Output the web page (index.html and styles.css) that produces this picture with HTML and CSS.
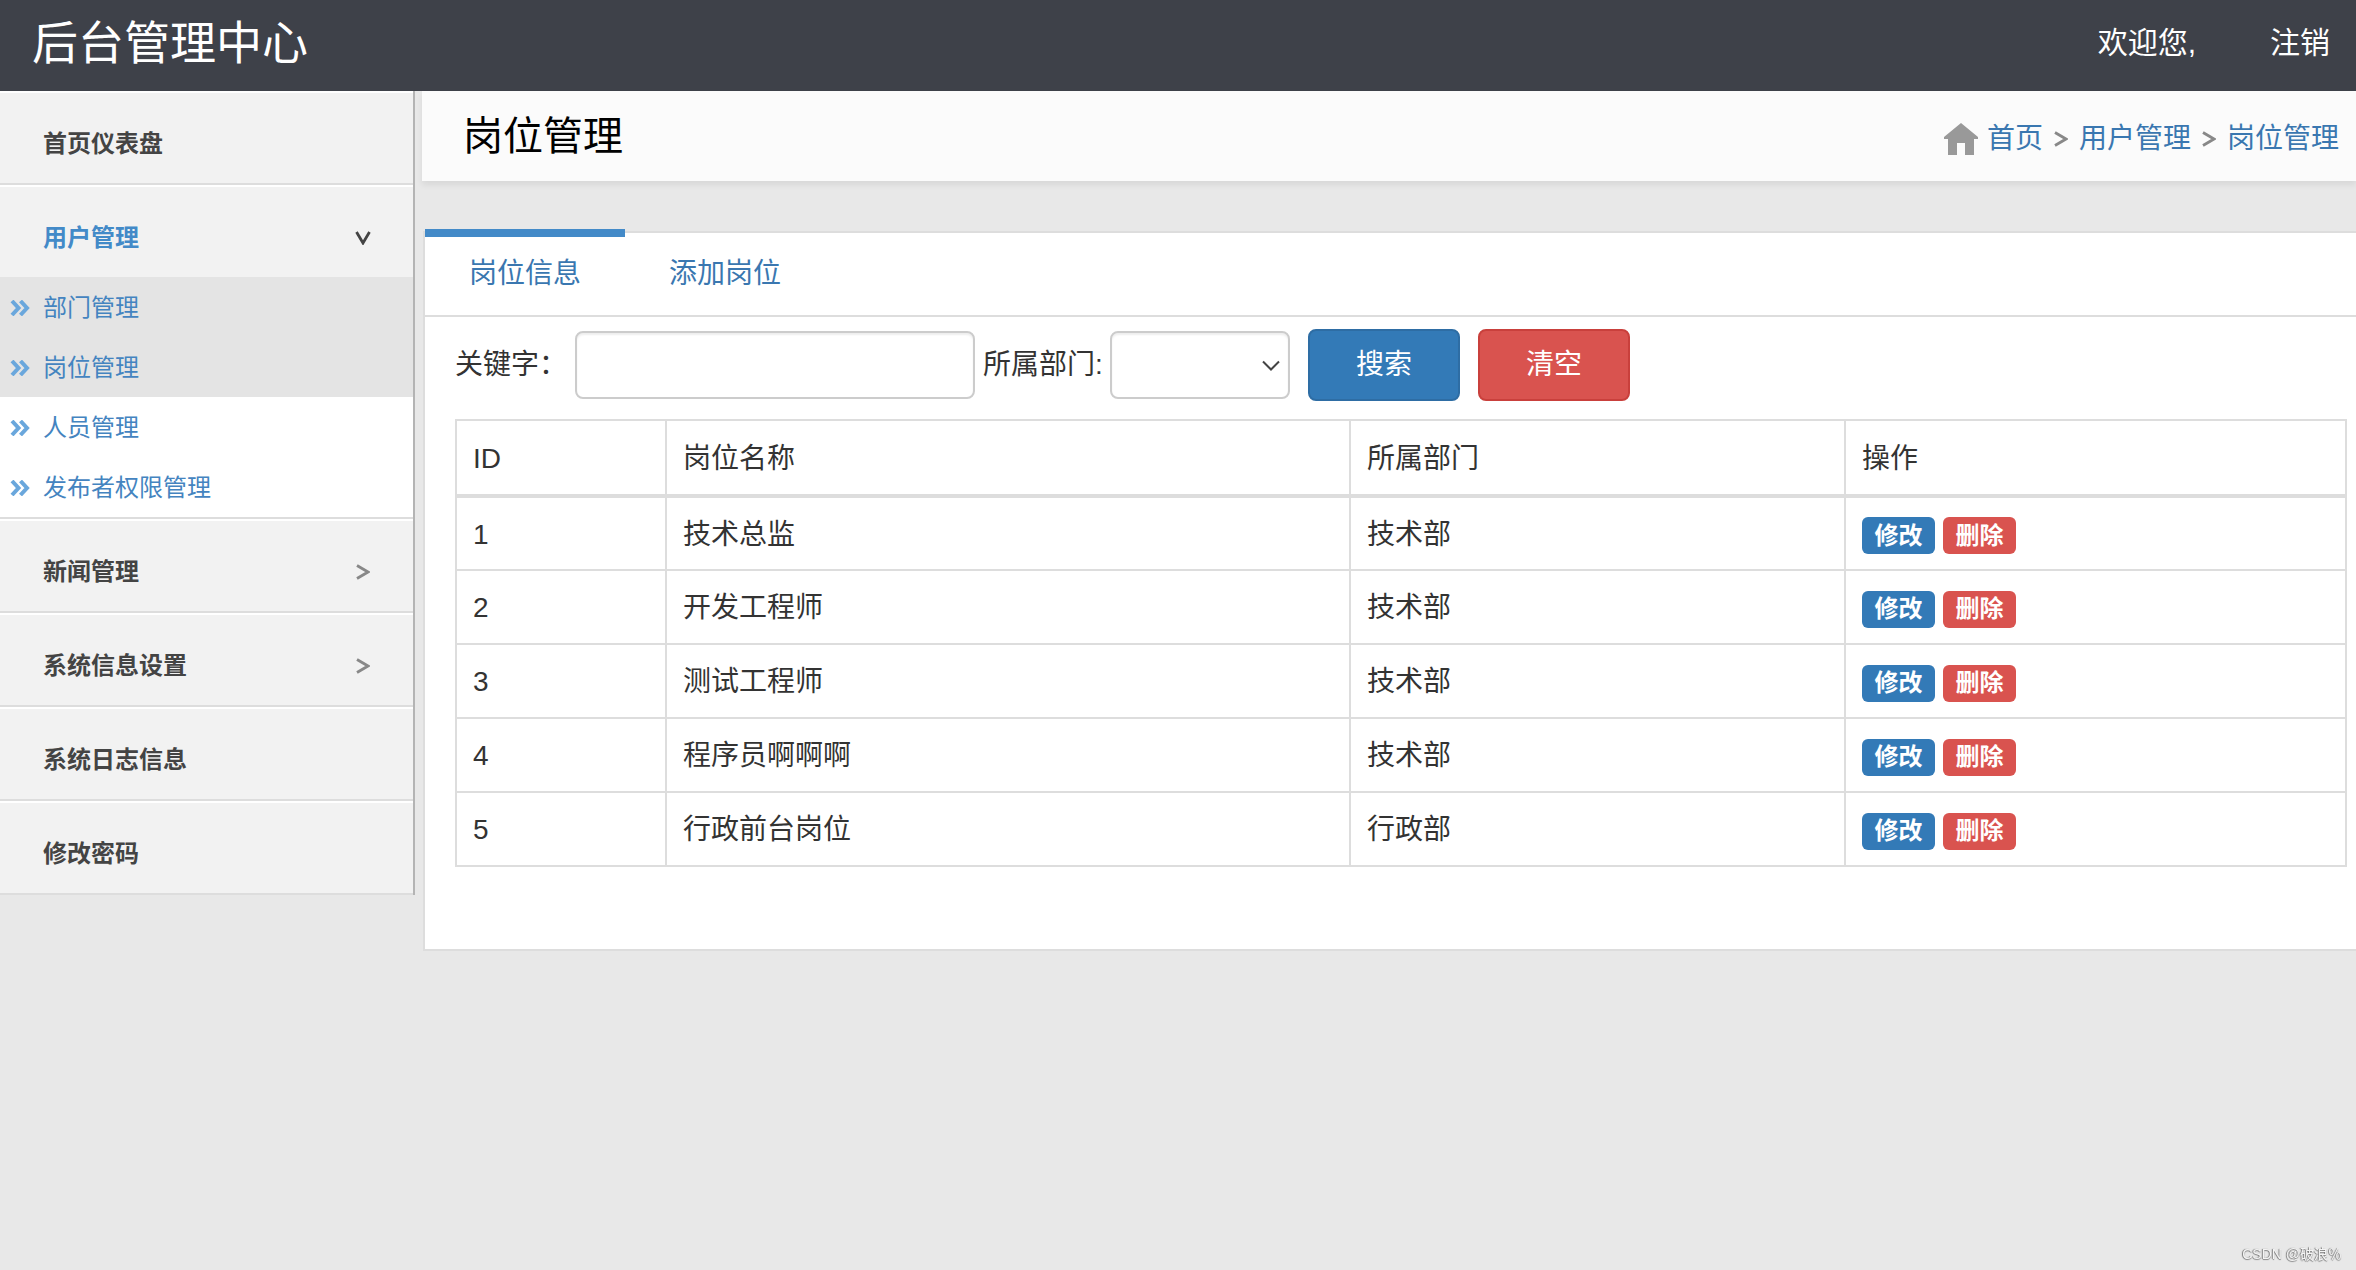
FILE: index.html
```html
<!DOCTYPE html>
<html lang="zh-CN">
<head>
<meta charset="utf-8">
<title>岗位管理 - 后台管理中心</title>
<link rel="stylesheet" href="styles.css">
</head>
<body>
<svg class="symbols" aria-hidden="true">
  <symbol id="arrow" viewBox="0 0 14 16"><path d="M1 1.500 L12 8 L1 14.500" fill="none" stroke="currentColor" stroke-width="2.800"/></symbol>
  <symbol id="double" viewBox="0 0 20 16"><path d="M2 1 L8.500 8 L2 15 M10.500 1 L17 8 L10.500 15" fill="none" stroke="currentColor" stroke-width="4"/></symbol>
</svg>
<header class="topbar">
  <h1 class="brand">后台管理中心</h1>
  <div class="account"><span class="welcome">欢迎您,</span><a class="logout" href="#">注销</a></div>
</header>
<div class="layout">
  <nav class="sidebar">
    <ul class="menu">
      <li class="menu-item"><a class="menu-link" href="#">首页仪表盘</a></li>
      <li class="menu-item">
        <a class="menu-link active" href="#">用户管理<svg class="arrow down"><use href="#arrow"/></svg></a>
        <ul class="submenu">
          <li><a class="sub-link current" href="#"><svg class="double"><use href="#double"/></svg>部门管理</a></li>
          <li><a class="sub-link current" href="#"><svg class="double"><use href="#double"/></svg>岗位管理</a></li>
          <li><a class="sub-link" href="#"><svg class="double"><use href="#double"/></svg>人员管理</a></li>
          <li><a class="sub-link" href="#"><svg class="double"><use href="#double"/></svg>发布者权限管理</a></li>
        </ul>
      </li>
      <li class="menu-item"><a class="menu-link" href="#">新闻管理<svg class="arrow"><use href="#arrow"/></svg></a></li>
      <li class="menu-item"><a class="menu-link" href="#">系统信息设置<svg class="arrow"><use href="#arrow"/></svg></a></li>
      <li class="menu-item"><a class="menu-link" href="#">系统日志信息</a></li>
      <li class="menu-item"><a class="menu-link" href="#">修改密码</a></li>
    </ul>
  </nav>
  <main class="content">
    <div class="page-head">
      <h2 class="page-title">岗位管理</h2>
      <nav class="crumbs">
        <svg class="home" viewBox="0 0 34 32"><path d="M17 0 L34 14 V16 H30 V32 H21 V20 H13 V32 H4 V16 H0 V14 Z" fill="#999"/></svg>
        <a href="#">首页</a><svg class="arrow"><use href="#arrow"/></svg><a href="#">用户管理</a><svg class="arrow"><use href="#arrow"/></svg><a href="#">岗位管理</a>
      </nav>
    </div>
    <section class="panel">
      <div class="tabs"><a class="tab selected" href="#">岗位信息</a><a class="tab" href="#">添加岗位</a></div>
      <div class="panel-body">
        <form class="search">
          <label class="keyword-label" for="keyword">关键字：</label>
          <input class="field keyword" id="keyword" type="text">
          <label class="dept-label" for="dept">所属部门:</label>
          <div class="select-wrap">
            <select class="field dept" id="dept"><option></option><option>技术部</option><option>行政部</option></select>
            <svg class="select-arrow" viewBox="0 0 18 12"><path d="M1 1.500 L9 9.500 L17 1.500" fill="none" stroke="#444" stroke-width="2"/></svg>
          </div>
          <button class="btn primary" type="button">搜索</button>
          <button class="btn danger" type="reset">清空</button>
        </form>
        <table class="grid">
          <colgroup><col class="col-id"><col class="col-name"><col class="col-dept"><col class="col-action"></colgroup>
          <thead><tr><th>ID</th><th>岗位名称</th><th>所属部门</th><th>操作</th></tr></thead>
          <tbody>
            <tr><td>1</td><td>技术总监</td><td>技术部</td><td><div class="actions"><button class="tag primary">修改</button><button class="tag danger">删除</button></div></td></tr>
            <tr><td>2</td><td>开发工程师</td><td>技术部</td><td><div class="actions"><button class="tag primary">修改</button><button class="tag danger">删除</button></div></td></tr>
            <tr><td>3</td><td>测试工程师</td><td>技术部</td><td><div class="actions"><button class="tag primary">修改</button><button class="tag danger">删除</button></div></td></tr>
            <tr><td>4</td><td>程序员啊啊啊</td><td>技术部</td><td><div class="actions"><button class="tag primary">修改</button><button class="tag danger">删除</button></div></td></tr>
            <tr><td>5</td><td>行政前台岗位</td><td>行政部</td><td><div class="actions"><button class="tag primary">修改</button><button class="tag danger">删除</button></div></td></tr>
          </tbody>
        </table>
      </div>
    </section>
  </main>
</div>
<div class="watermark">CSDN @破浪％</div>
</body>
</html>
```
FILE: styles.css
```css
* { box-sizing: border-box; }
body {
  margin: 0;
  min-height: 100vh;
  background: #e8e8e8;
  color: #333;
  font: 28px/40px "Liberation Sans", "Noto Sans CJK SC", sans-serif;
}
a { color: #3a77b0; text-decoration: none; }
ul { list-style: none; margin: 0; padding: 0; }
button, input, select { font: inherit; color: inherit; }
.symbols { display: none; }

.topbar {
  display: flex;
  align-items: center;
  justify-content: space-between;
  height: 91px;
  padding: 0 26px 6px 32px;
  background: #3e4149;
  color: #fff;
}
.brand { margin: 0; font-size: 46px; font-weight: 400; line-height: 60px; }
.account { display: flex; gap: 74px; font-size: 30px; }
.logout { color: #fff; }

.layout { display: flex; align-items: flex-start; }
.sidebar { flex: 0 0 415px; border-right: 2px solid #b4b4b4; }
.menu-item { border-top: 2px solid #fff; border-bottom: 2px solid #ddd; }
.menu-link {
  display: flex;
  align-items: center;
  justify-content: space-between;
  height: 90px;
  padding: 12px 43px 0 43px;
  background: #f2f2f2;
  color: #444;
  font-size: 24px;
  font-weight: 700;
}
.menu-link.active { color: #438ac8; }
.arrow { width: 14px; height: 16px; color: #888; }
.arrow.down { color: #444; transform: rotate(90deg); }
.submenu { background: #fff; }
.sub-link {
  display: flex;
  align-items: center;
  gap: 13px;
  height: 60px;
  padding: 2px 0 0 10px;
  color: #4484c0;
  font-size: 24px;
}
.sub-link.current { background: #e4e4e4; }
.double { width: 20px; height: 16px; color: #6aa7dc; }

.content { flex: 1; min-width: 0; padding-left: 7px; }
.page-head {
  display: flex;
  align-items: center;
  justify-content: space-between;
  height: 90px;
  padding: 0 17px 0 41px;
  background: #fbfbfb;
  box-shadow: 0 4px 6px rgba(0, 0, 0, 0.07);
}
.page-title { margin: 0; color: #000; font-size: 40px; font-weight: 400; line-height: 60px; }
.crumbs { display: flex; align-items: center; gap: 11px; padding-top: 6px; }
.home { width: 34px; height: 32px; margin-right: -2px; }

.panel {
  margin: 50px 0 0 1px;
  border: 2px solid #ddd;
  border-right: 0;
  background: #fff;
}
.tabs { display: flex; height: 84px; border-bottom: 2px solid #ddd; }
.tab { width: 200px; padding: 21px 0 0 44px; }
.tab.selected {
  height: 86px;
  margin-top: -4px;
  padding-top: 17px;
  border-top: 8px solid #438ac8;
}
.panel-body { padding: 12px 9px 82px 30px; }
.search { display: flex; align-items: center; height: 72px; margin-bottom: 18px; }
.keyword-label { width: 120px; }
.field {
  width: 100%;
  height: 68px;
  padding: 0 22px;
  border: 2px solid #ccc;
  border-radius: 8px;
  background: #fff;
  box-shadow: inset 0 2px 2px rgba(0, 0, 0, 0.07);
  appearance: none;
}
.keyword { width: 400px; }
.dept-label { width: 127px; margin-left: 8px; }
.select-wrap { position: relative; width: 180px; margin-right: 18px; }
.dept { display: block; }
.select-arrow { position: absolute; right: 10px; top: 29px; width: 18px; height: 12px; pointer-events: none; }
.btn {
  width: 152px;
  height: 72px;
  margin-right: 18px;
  padding: 0;
  border: 2px solid;
  border-radius: 8px;
  color: #fff;
}
.primary { background: #337ab7; border-color: #2e6da4; }
.danger { background: #d9534f; border-color: #c9403c; }

.grid { width: 100%; table-layout: fixed; border-collapse: collapse; }
.grid th, .grid td { height: 74px; padding: 2px 16px 0; border: 2px solid #ddd; text-align: left; font-weight: 400; }
.grid thead th { height: 76px; border-bottom-width: 4px; }
.col-id { width: 210px; }
.col-dept { width: 495px; }
.col-action { width: 501px; }
.actions { display: flex; gap: 8px; padding-top: 2px; }
.tag {
  width: 73px;
  height: 37px;
  padding: 0;
  border: 0;
  border-radius: 6px;
  color: #fff;
  font-size: 24px;
  font-weight: 700;
  line-height: 36px;
}
.watermark {
  position: fixed;
  right: 14px;
  bottom: 6px;
  color: #f4f4f4;
  font-size: 14px;
  line-height: 20px;
  text-shadow: -1px 0 1px #777, 0 1px 1px #888;
}
```
